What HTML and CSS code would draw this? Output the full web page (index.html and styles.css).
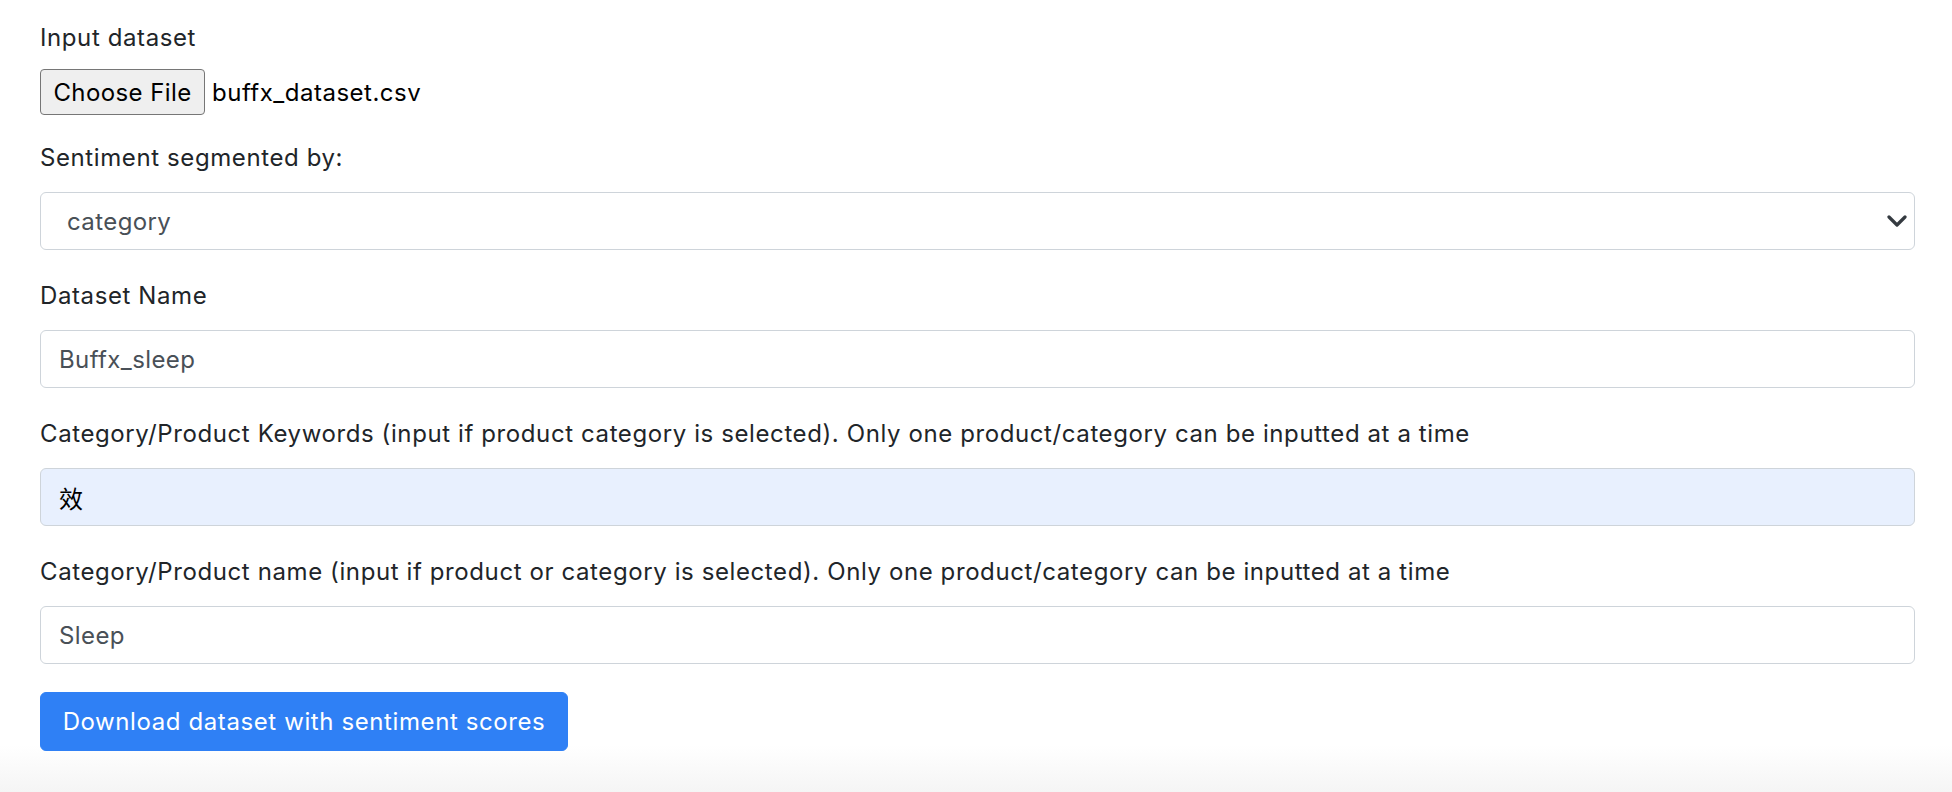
FILE: index.html
```html
<!DOCTYPE html>
<html lang="en">
<head>
<meta charset="utf-8">
<title>Sentiment dataset</title>
<link rel="stylesheet" href="styles.css">
</head>
<body>
<form class="page">
  <div class="group group-file">
    <label class="label">Input dataset</label>
    <div class="file-row">
      <button type="button" class="file-btn">Choose File</button>
      <span class="file-name">buffx_dataset.csv</span>
    </div>
  </div>

  <div class="group">
    <label class="label">Sentiment segmented by:</label>
    <div class="select-wrap">
      <select class="control select">
        <option>category</option>
      </select>
      <svg class="chevron" viewBox="0 0 20 12" width="20" height="12" aria-hidden="true">
        <path d="M2 2 L10 10 L18 2" fill="none" stroke="#343a40" stroke-width="3.2" stroke-linecap="round" stroke-linejoin="round"/>
      </svg>
    </div>
  </div>

  <div class="group">
    <label class="label">Dataset Name</label>
    <input class="control" type="text" value="Buffx_sleep">
  </div>

  <div class="group">
    <label class="label">Category/Product Keywords (input if product category is selected). Only one product/category can be inputted at a time</label>
    <input class="control control-filled" type="text" value="效">
  </div>

  <div class="group">
    <label class="label">Category/Product name (input if product or category is selected). Only one product/category can be inputted at a time</label>
    <input class="control" type="text" value="Sleep">
  </div>

  <button type="button" class="btn-primary">Download dataset with sentiment scores</button>
</form>
</body>
</html>
```

FILE: styles.css
```css
html, body {
  margin: 0;
  padding: 0;
}

body {
  font-family: Inter, "Noto Sans CJK SC", sans-serif;
  font-size: 24px;
  letter-spacing: 0.6px;
  color: #212529;
  background: linear-gradient(to bottom, #ffffff 0, #ffffff 745px, #f5f5f5 792px);
  min-height: 792px;
}

.page {
  padding: 20px 37px 0 40px;
}

.group {
  margin-bottom: 28px;
}

.group-file {
  margin-bottom: 25px;
}

.label {
  display: block;
  line-height: 36px;
  margin-bottom: 16px;
}

.group-file .label {
  margin-bottom: 13px;
}

.file-row {
  display: flex;
  align-items: center;
  gap: 7px;
}

.file-btn {
  height: 46px;
  width: 165px;
  box-sizing: border-box;
  background: #efefef;
  border: 1px solid #767676;
  border-radius: 4px;
  font-family: Inter, sans-serif;
  font-size: 24px;
  letter-spacing: 0.4px;
  color: #000;
  padding: 0;
}

.file-name {
  font-size: 24px;
  letter-spacing: 0.5px;
  color: #000;
}

.control {
  display: block;
  width: 100%;
  height: 58px;
  box-sizing: border-box;
  border: 1px solid #ced4da;
  border-radius: 6px;
  background: #fff;
  padding: 0 18px;
  font-family: Inter, "Noto Sans CJK SC", sans-serif;
  font-size: 24px;
  letter-spacing: 0.4px;
  color: #495057;
  outline: none;
}

.control-filled {
  background: #e8f0fe;
  color: #000;
}

.select-wrap {
  position: relative;
}

.select {
  appearance: none;
  -webkit-appearance: none;
  padding-left: 26px;
}

.chevron {
  position: absolute;
  right: 8px;
  top: 50%;
  transform: translateY(-50%);
  pointer-events: none;
}

.btn-primary {
  display: block;
  height: 59px;
  width: 528px;
  box-sizing: border-box;
  background: #2f80f5;
  border: 1px solid #2f80f5;
  border-radius: 6px;
  color: #fff;
  font-family: Inter, sans-serif;
  font-size: 24px;
  letter-spacing: 0.6px;
  padding: 0;
}
```
